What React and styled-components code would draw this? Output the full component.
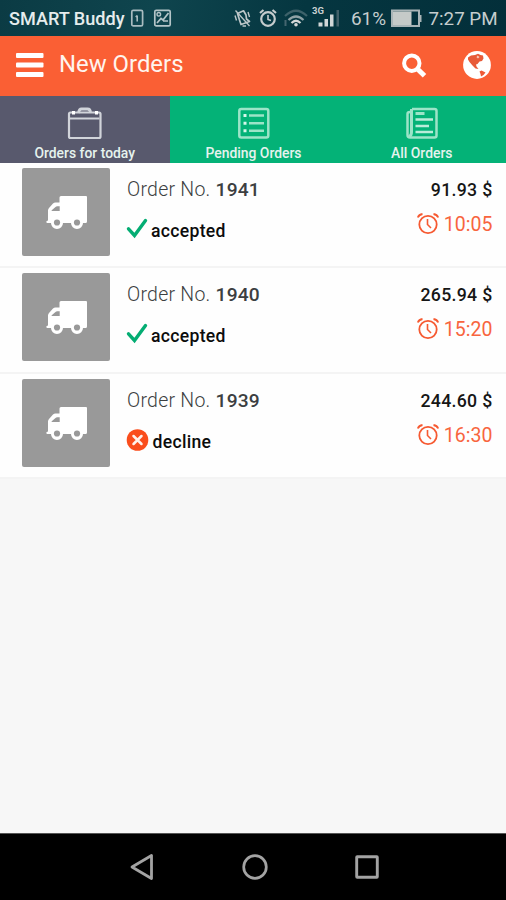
import React from 'react';
import styled, { createGlobalStyle } from 'styled-components';

const GlobalStyle = createGlobalStyle`
  * {
    box-sizing: border-box;
  }

  body {
    margin: 0;
    font-family: Roboto, sans-serif;
    background-color: #f7f7f7;
  }
`;

const Screen = styled.div`
  width: 506px;
  height: 900px;
  display: flex;
  flex-direction: column;
  overflow: hidden;
  background-color: #f7f7f7;
`;

const Icon = styled.svg`
  display: block;
  flex-shrink: 0;
  overflow: visible;
  width: ${props => props.$width}px;
  height: ${props => props.$height}px;
  margin-left: ${props => props.$left || 0}px;
  margin-top: ${props => props.$top || 0}px;
`;

const StatusBar = styled.div`
  display: flex;
  align-items: flex-start;
  height: 36px;
  flex-shrink: 0;
  padding-left: 9px;
  background: linear-gradient(100deg, #0b3b44 0%, #0f454e 30%, #053640 60%, #032f3a 100%);
`;

const StatusText = styled.span`
  font-size: ${props => props.$size}px;
  line-height: 22px;
  margin-top: ${props => props.$top ?? 8}px;
  margin-left: ${props => props.$left || 0}px;
  width: ${props => props.$width}px;
  white-space: nowrap;
  color: ${props => props.$color};
  font-weight: ${props => props.$weight || 400};
`;

const Header = styled.header`
  display: flex;
  height: 60px;
  flex-shrink: 0;
  padding-left: 16px;
  background-color: #fa5f34;
`;

const Title = styled.h1`
  width: 125px;
  margin: 14px 0 0 16px;
  font-size: 23.9px;
  line-height: 28px;
  font-weight: 400;
  white-space: nowrap;
  color: #fff4ee;
`;

const Tabs = styled.nav`
  display: flex;
  height: 67px;
  flex-shrink: 0;
`;

const Tab = styled.div`
  display: flex;
  flex-direction: column;
  align-items: center;
  width: ${props => props.$width}px;
  padding-top: 11px;
  background-color: ${props => (props.$active ? '#58596d' : '#04b277')};
`;

const TabLabel = styled.span`
  margin-top: 5px;
  font-size: 13.9px;
  line-height: 17px;
  font-weight: 500;
  color: #e6f3ee;
`;

const Orders = styled.main`
  flex: 1;
`;

const Order = styled.div`
  display: flex;
  height: 105.3px;
  padding: 5px 13.5px 0 22px;
  background-color: #fefefe;
  box-shadow: inset 0 -2px 0 #f4f4f4;
`;

const Thumb = styled.div`
  width: 88px;
  height: 88px;
  border-radius: 2px;
  padding: 28px 0 0 24px;
  background-color: #999999;
`;

const Details = styled.div`
  flex: 1;
  padding: 10px 0 0 17px;
`;

const OrderNumber = styled.div`
  font-size: 19.5px;
  line-height: 24px;
  font-weight: 300;
  letter-spacing: 0.25px;
  color: #3c3f41;

  b {
    font-size: 19.2px;
    font-weight: 500;
    letter-spacing: 0.2px;
  }
`;

const Status = styled.div`
  display: flex;
  align-items: flex-start;
  height: 24px;
  margin-top: 17px;
  font-size: 17.6px;
  line-height: 24px;
  font-weight: 500;
  color: #0c0c0c;
`;

const StatusLabel = styled.span`
  margin-left: ${props => props.$left}px;
  letter-spacing: ${props => props.$spacing}px;
`;

const Summary = styled.div`
  display: flex;
  flex-direction: column;
  align-items: flex-end;
  padding-top: 10px;
`;

const Price = styled.div`
  font-size: 17.7px;
  line-height: 24px;
  font-weight: 500;
  letter-spacing: 0.3px;
  color: #161616;
`;

const Time = styled.div`
  display: flex;
  height: 24px;
  margin-top: 11px;
  font-size: 19.5px;
  line-height: 24px;
  font-weight: 400;
  color: #f8653e;
`;

const NavBar = styled.footer`
  display: flex;
  height: 67px;
  flex-shrink: 0;
  border-top: 1px solid #555;
  background-color: #000;
`;

const TruckIcon = () => (
  <Icon $width={41} $height={34} viewBox="0 0 41 34">
    <path
      fill="#fff"
      fillRule="evenodd"
      d="M15 0H40a1 1 0 0 1 1 1V25.500a1.500 1.500 0 0 1-1.500 1.500H37a6 6 0 0 1-12 0H17a6 6 0 0 1-12 0H1.500Q.3 27 .3 25.800.3 24.800 2 24.600V14.500Q2 13 3 12L7 7.500Q8 6.600 9.500 6.500H13.500V1.500Q13.500 0 15 0ZM5.500 15H13.700V10.200H11.200Q10.200 10.200 9.500 10.900L6 14Q5.500 14.500 5.500 15Z"
    />
    <circle cx="11" cy="26.500" r="3.100" fill="#999" />
    <circle cx="31" cy="26.500" r="3.100" fill="#999" />
  </Icon>
);

const AlarmIcon = () => (
  <Icon $width={22} $height={22} viewBox="0 0 22 22" fill="none" stroke="#f65a32">
    <circle cx="11" cy="11.500" r="8.700" strokeWidth="1.800" />
    <path d="M10.500 6V11.500L14 15" strokeWidth="1.600" />
    <path d="M.8 4.500Q2 1.500 5.500 1M16.500 1Q20 1.500 21.200 4.500" strokeWidth="1.900" />
  </Icon>
);

const AcceptedIcon = () => (
  <Icon $width={20} $height={19} viewBox="0 0 20 19">
    <path d="M1.500 9.800L7.500 16.500L18.500 1.500" fill="none" stroke="#04ad73" strokeWidth="3.400" strokeLinecap="round" strokeLinejoin="miter" />
  </Icon>
);

const DeclinedIcon = () => (
  <Icon $width={22} $height={22} viewBox="0 0 22 22">
    <circle cx="10.500" cy="10" r="10.800" fill="#fa4d1c" />
    <path d="M6.500 6L14.500 14M14.500 6L6.500 14" stroke="#fff2ec" strokeWidth="2.500" strokeLinecap="round" />
  </Icon>
);

const orders = [
  { number: 1941, price: '91.93 $', time: '10:05', accepted: true },
  { number: 1940, price: '265.94 $', time: '15:20', accepted: true },
  { number: 1939, price: '244.60 $', time: '16:30', accepted: false },
];

const OrderRow = ({ order }) => (
  <Order>
    <Thumb>
      <TruckIcon />
    </Thumb>
    <Details>
      <OrderNumber>
        Order No. <b>{order.number}</b>
      </OrderNumber>
      <Status>
        {order.accepted ? <AcceptedIcon /> : <DeclinedIcon />}
        <StatusLabel $left={order.accepted ? 4 : 3.5} $spacing={0.3}>
          {order.accepted ? 'accepted' : 'decline'}
        </StatusLabel>
      </Status>
    </Details>
    <Summary>
      <Price>{order.price}</Price>
      <Time>
        <AlarmIcon />
        <StatusLabel $left={5} $spacing={0.05}>
          {order.time}
        </StatusLabel>
      </Time>
    </Summary>
  </Order>
);

const PhoneStatus = () => (
  <StatusBar>
    <StatusText $size={18.1} $width={116} $color="#e6eded" $weight={500}>
      SMART Buddy
    </StatusText>
    <Icon $width={12} $height={17} $left={6} $top={10} viewBox="0 0 12 17" fill="none" stroke="#a9bcc0" strokeWidth="1.700">
      <rect x=".8" y=".3" width="10.800" height="15.600" rx="1.500" />
      <path d="M6.200 5.500V11.500M4.700 7L6.200 5.500" strokeWidth="1.600" />
    </Icon>
    <Icon $width={17} $height={17} $left={11} $top={10} viewBox="0 0 17 17" fill="none" stroke="#b4c5c8" strokeWidth="1.700">
      <rect x=".8" y=".3" width="15.400" height="15.600" rx="1.500" />
      <path d="M3 13L7 8.500L9 10L14.500 3M9 11H14" />
      <circle cx="4.800" cy="4.300" r="1.800" strokeWidth="1.400" />
    </Icon>
    <Icon $width={17} $height={18} $left={63} $top={9} viewBox="0 0 17 18" fill="none" stroke="#bdc7c9" strokeWidth="1.700">
      <path d="M3.500 4.500L9.500 1.800L12 6L12.500 10L15.500 12.500L7 15.500L5.500 11Z" strokeLinejoin="round" />
      <path d="M1.500 1.500L15.500 17" strokeWidth="1.300" />
      <path d="M1 6.500L2.500 11.500M14 3L15.500 8M8.500 17H12" strokeWidth="1.400" />
    </Icon>
    <Icon $width={18} $height={18} $left={8} $top={9} viewBox="0 0 18 18" fill="none" stroke="#c5cccd">
      <circle cx="9" cy="10" r="6.800" strokeWidth="2.200" />
      <path d="M9 6V10.500L12 11.500" strokeWidth="1.600" />
      <path d="M1 4L4.500 1M13.500 1L17 4" strokeWidth="2.200" />
    </Icon>
    <Icon $width={23} $height={18} $left={7} $top={9} viewBox="0 0 23 18" fill="none">
      <path d="M1 7Q12 -3.500 23 7" stroke="#3e626a" strokeWidth="2.200" />
      <path d="M4.500 11Q12 4 19.500 11" stroke="#8fa2a6" strokeWidth="2.200" />
      <path d="M7.500 14Q12 9.500 16.500 14" stroke="#d5d9d9" strokeWidth="2.200" />
      <circle cx="12" cy="15.700" r="1.800" fill="#d5d9d9" />
      <path d="M1.500 11V17" stroke="#456670" strokeWidth="2" />
    </Icon>
    <StatusText $size={9.5} $width={13} $left={5} $top={-0.5} $color="#c9d0d1" $weight={700}>
      3G
    </StatusText>
    <Icon $width={21} $height={18} $left={-6} $top={9} viewBox="0 0 21 18">
      <path d="M-.5 13.500H3.500V17.500H-.5ZM5.500 10H9V17.500H5.500ZM11 5.500H14.500V17.500H11Z" fill="#d1d7d7" />
      <path d="M17.500 1H20V17.500H17.500Z" fill="#416069" />
    </Icon>
    <StatusText $size={18.9} $width={38} $left={11} $color="#c5cdce">
      61%
    </StatusText>
    <Icon $width={32} $height={17} $left={2} $top={10} viewBox="0 0 32 17">
      <rect x="1" y=".5" width="27" height="15.500" fill="none" stroke="#a9b5b7" strokeWidth="2" />
      <rect x="2" y="1.500" width="18.500" height="13.500" fill="#c5cac8" />
      <path d="M28 5H30.500V12H28Z" fill="#a9b5b7" />
    </Icon>
    <StatusText $size={18.8} $width={72} $left={5.5} $color="#c5cdce">
      7:27 PM
    </StatusText>
  </StatusBar>
);

const App = () => (
  <>
    <GlobalStyle />
    <Screen>
      <PhoneStatus />
      <Header>
        <Icon $width={27} $height={24} $top={17} viewBox="0 0 27 24" fill="#fff">
          <rect width="27.500" height="5" rx="1" />
          <rect y="9.500" width="27.500" height="5" rx="1" />
          <rect y="19" width="27.500" height="5" rx="1" />
        </Icon>
        <Title>New Orders</Title>
        <Icon $width={25} $height={25} $left={218} $top={17} viewBox="0 0 25 25" fill="none" stroke="#fff">
          <circle cx="9.800" cy="10.200" r="7.700" strokeWidth="4" />
          <path d="M16 16.500L22.500 22.800" strokeWidth="5" />
        </Icon>
        <Icon $width={28} $height={28} $left={36} $top={15} viewBox="0 0 28 28">
          <circle cx="14" cy="14" r="13.900" fill="#fff" />
          <path
            d="M5 6.500L8 4.500L12 4L15 2.800L17.500 4L20 4.500L20.500 7.500L19 10L16.500 10.500L14.500 13L13 13.500L13.500 15.500L15.500 18L12.500 17.500L9.500 14.500L6.500 11L5 8.500Z"
            fill="#e85a38"
          />
          <path d="M16.500 20.500L18.500 19.500L22.500 21.500L20.500 24L18 25.500L17.500 23Z" fill="#ee5a36" />
          <path d="M14.500 4.500L16.500 6L15 7.500L13.500 6.200Z" fill="#f8c7b8" />
        </Icon>
      </Header>
      <Tabs>
        <Tab $active $width={169.5}>
          <Icon $width={34} $height={33} viewBox="0 0 34 33" fill="none" stroke="#d1d4da">
            <rect x="1" y="5.500" width="31.500" height="25.500" rx="1.500" strokeWidth="2.200" />
            <path d="M2 11.500H31.500" strokeWidth="2" />
            <path d="M10.500 6Q11 2 13.500 2H19.500Q22.500 2 22.500 6" strokeWidth="2.800" />
            <path d="M5.500 4V7.500M28.500 4V7.500" stroke="#fff" strokeWidth="3" />
          </Icon>
          <TabLabel>Orders for today</TabLabel>
        </Tab>
        <Tab $width={168}>
          <Icon $width={32} $height={33} viewBox="0 0 32 33" fill="none" stroke="#9ce4c8">
            <rect x="1.300" y="2" width="29" height="28.500" rx="2" strokeWidth="2.500" />
            <path d="M11 8.500H26M11 16.200H26M11 23.700H26" strokeWidth="2.500" />
            <path d="M5.500 8.500H8.500M5.500 16.200H8.500M5.500 23.700H8.500" stroke="#d8f7eb" strokeWidth="3" />
          </Icon>
          <TabLabel>Pending Orders</TabLabel>
        </Tab>
        <Tab $width={168.5}>
          <Icon $width={32} $height={33} viewBox="0 0 32 33" fill="none" stroke="#9ce4c8">
            <path d="M6 2H28.500Q30.500 2 30.500 4V28.500Q30.500 30.500 28.500 30.500H4Q1.500 30.500 1.500 28V7Q1.500 5 4 5H6" strokeWidth="2.500" />
            <path d="M5.500 2V25Q5.500 29 3 29.500" strokeWidth="3" />
            <path d="M9.500 6.500H18.500" strokeWidth="3" />
            <path d="M9.500 12.500H27M9.500 19H23M9.500 25H27" stroke="#b9ecd9" strokeWidth="2.300" />
          </Icon>
          <TabLabel>All Orders</TabLabel>
        </Tab>
      </Tabs>
      <Orders>
        {orders.map(order => (
          <OrderRow key={order.number} order={order} />
        ))}
      </Orders>
      <NavBar>
        <Icon $width={24} $height={26} $left={130} $top={20} viewBox="0 0 24 26">
          <path d="M21.500 1.500V24.500L2 13Z" fill="none" stroke="#a3a3a3" strokeWidth="2.800" strokeLinejoin="round" />
        </Icon>
        <Icon $width={26} $height={26} $left={87.5} $top={20} viewBox="0 0 26 26">
          <circle cx="13" cy="13" r="11.300" fill="none" stroke="#a3a3a3" strokeWidth="2.700" />
        </Icon>
        <Icon $width={24} $height={24} $left={87} $top={21} viewBox="0 0 24 24">
          <rect x="1.700" y="1.700" width="20.600" height="20.600" rx=".5" fill="none" stroke="#a3a3a3" strokeWidth="2.900" />
        </Icon>
      </NavBar>
    </Screen>
  </>
);

export default App;
